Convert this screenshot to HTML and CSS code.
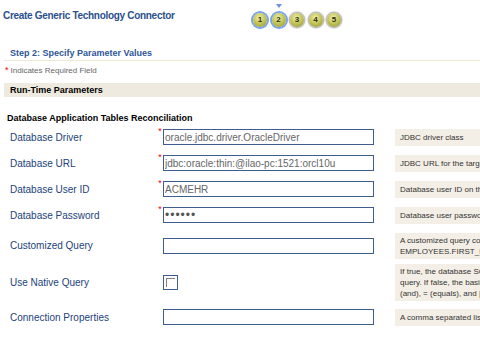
FILE: index.html
```html
<!DOCTYPE html>
<html lang="en">
<head>
    <meta charset="UTF-8">
    <meta name="viewport" content="width=device-width, initial-scale=1.0">
    <title>Create Generic Technology Connector</title>
    <link rel="stylesheet" href="styles.css">
</head>
<body>
    <div class="header">
        <h1 class="title">Create Generic Technology Connector</h1>
        <div class="steps">
            <span class="step done">1</span>
            <span class="step done current">2</span>
            <span class="step">3</span>
            <span class="step">4</span>
            <span class="step">5</span>
        </div>
    </div>

    <h2 class="step-title">Step 2: Specify Parameter Values</h2>
    <p class="required-note"><span class="req">*</span>Indicates Required Field</p>

    <div class="section-bar">Run-Time Parameters</div>
    <h3 class="group-title">Database Application Tables Reconciliation</h3>

    <div class="form">
        <div class="row">
            <label class="label">Database Driver</label>
            <span class="mark">*</span>
            <input class="field" type="text" value="oracle.jdbc.driver.OracleDriver">
            <div class="help">JDBC driver class</div>
        </div>
        <div class="row">
            <label class="label">Database URL</label>
            <span class="mark">*</span>
            <input class="field" type="text" value="jdbc:oracle:thin:@ilao-pc:1521:orcl10u">
            <div class="help">JDBC URL for the target database</div>
        </div>
        <div class="row">
            <label class="label">Database User ID</label>
            <span class="mark">*</span>
            <input class="field" type="text" value="ACMEHR">
            <div class="help">Database user ID on the target database</div>
        </div>
        <div class="row">
            <label class="label">Database Password</label>
            <span class="mark">*</span>
            <input class="field field-password" type="password" value="secret">
            <div class="help">Database user password</div>
        </div>
        <div class="row">
            <label class="label">Customized Query</label>
            <span class="mark"></span>
            <input class="field" type="text" value="">
            <div class="help">A customized query condition, e.g.<br>EMPLOYEES.FIRST_NAME='John'</div>
        </div>
        <div class="row row-compact">
            <label class="label">Use Native Query</label>
            <span class="mark"></span>
            <span class="check"><span class="check-box"></span></span>
            <div class="help">If true, the database SQL syntax is used in the<br>query. If false, the basic operators &amp;<br>(and), = (equals), and | (or) are used.</div>
        </div>
        <div class="row">
            <label class="label">Connection Properties</label>
            <span class="mark"></span>
            <input class="field" type="text" value="">
            <div class="help">A comma separated list of properties</div>
        </div>
    </div>
</body>
</html>
```

FILE: styles.css
```css
body {
    margin: 0;
    font-family: "Liberation Sans", Arial, sans-serif;
    background-color: #fff;
    overflow: hidden;
}
.header {
    display: flex;
    height: 48px;
    box-sizing: border-box;
    padding: 10px 0 0 3px;
}
.title {
    margin: 0;
    width: 250px;
    font-size: 10px;
    line-height: 12px;
    font-weight: bold;
    color: #2b4f8c;
    letter-spacing: -0.3px;
}
.steps {
    display: flex;
    gap: 4.5px;
    margin-top: 2.5px;
}
.step {
    position: relative;
    width: 14px;
    height: 14px;
    border-radius: 50%;
    font-size: 8px;
    font-weight: bold;
    line-height: 14px;
    text-align: center;
    color: #2c2c10;
    background: radial-gradient(circle at 45% 35%, #f0f2b0 0, #c5c65a 45%, #8d8e2c 100%);
    box-shadow: 0 0 1px 1.5px #b9b9b9;
}
.step.done {
    box-shadow: 0 0 0 2px #79a3ec;
}
.step.current::before {
    content: "";
    position: absolute;
    left: 4px;
    top: -9px;
    border-left: 3px solid transparent;
    border-right: 3px solid transparent;
    border-top: 4px solid #6d8fe4;
}
.step-title {
    margin: 0 0 0 4px;
    padding: 0 0 1px 6px;
    font-size: 9px;
    line-height: 11px;
    font-weight: bold;
    color: #2f5597;
    border-bottom: 1px solid #f1e9d6;
}
.required-note {
    margin: 4px 0 0 5px;
    font-size: 8px;
    line-height: 10px;
    color: #666;
}
.req {
    color: #e00;
    font-size: 9px;
    margin-right: 2px;
}
.section-bar {
    margin: 7px 0 0 4px;
    padding-left: 6px;
    height: 14px;
    line-height: 14px;
    font-size: 9px;
    font-weight: bold;
    color: #000;
    background-color: #efeadf;
}
.group-title {
    margin: 16px 0 0 7px;
    font-size: 9px;
    line-height: 11px;
    font-weight: bold;
    color: #000;
}
.form {
    margin-top: 0;
}
.row {
    display: flex;
    align-items: center;
    padding: 4.5px 0;
}
.row-compact {
    padding: 1px 0 3px;
}
.label {
    width: 147px;
    flex: none;
    padding-left: 10px;
    font-size: 10px;
    color: #23427a;
}
.mark {
    width: 6px;
    height: 16px;
    flex: none;
    font-size: 9px;
    line-height: 4px;
    color: #e00;
    text-align: center;
}
.field {
    width: 211px;
    height: 16px;
    flex: none;
    box-sizing: border-box;
    margin: 0;
    border: 1px solid #3e5c8e;
    padding: 0 1px;
    font-family: "Liberation Sans", Arial, sans-serif;
    font-size: 10px;
    color: #666;
    outline: none;
}
.field-password {
    font-size: 12px;
    letter-spacing: 1px;
    color: #555;
}
.check {
    width: 211px;
    flex: none;
    display: flex;
}
.check-box {
    width: 15px;
    height: 15px;
    box-sizing: border-box;
    border: 1px solid #3e5c8e;
    padding: 2px;
    display: flex;
}
.check-box::before {
    content: "";
    width: 9px;
    height: 9px;
    box-sizing: border-box;
    border-top: 1px solid #808080;
    border-left: 1px solid #808080;
}
.help {
    flex: 1;
    min-width: 0;
    min-height: 17px;
    box-sizing: border-box;
    margin-left: 21px;
    padding: 2px 5px;
    font-size: 8px;
    line-height: 11px;
    color: #333;
    background-color: #f3efe6;
    white-space: nowrap;
    overflow: hidden;
    display: flex;
    flex-direction: column;
    justify-content: center;
}
```
